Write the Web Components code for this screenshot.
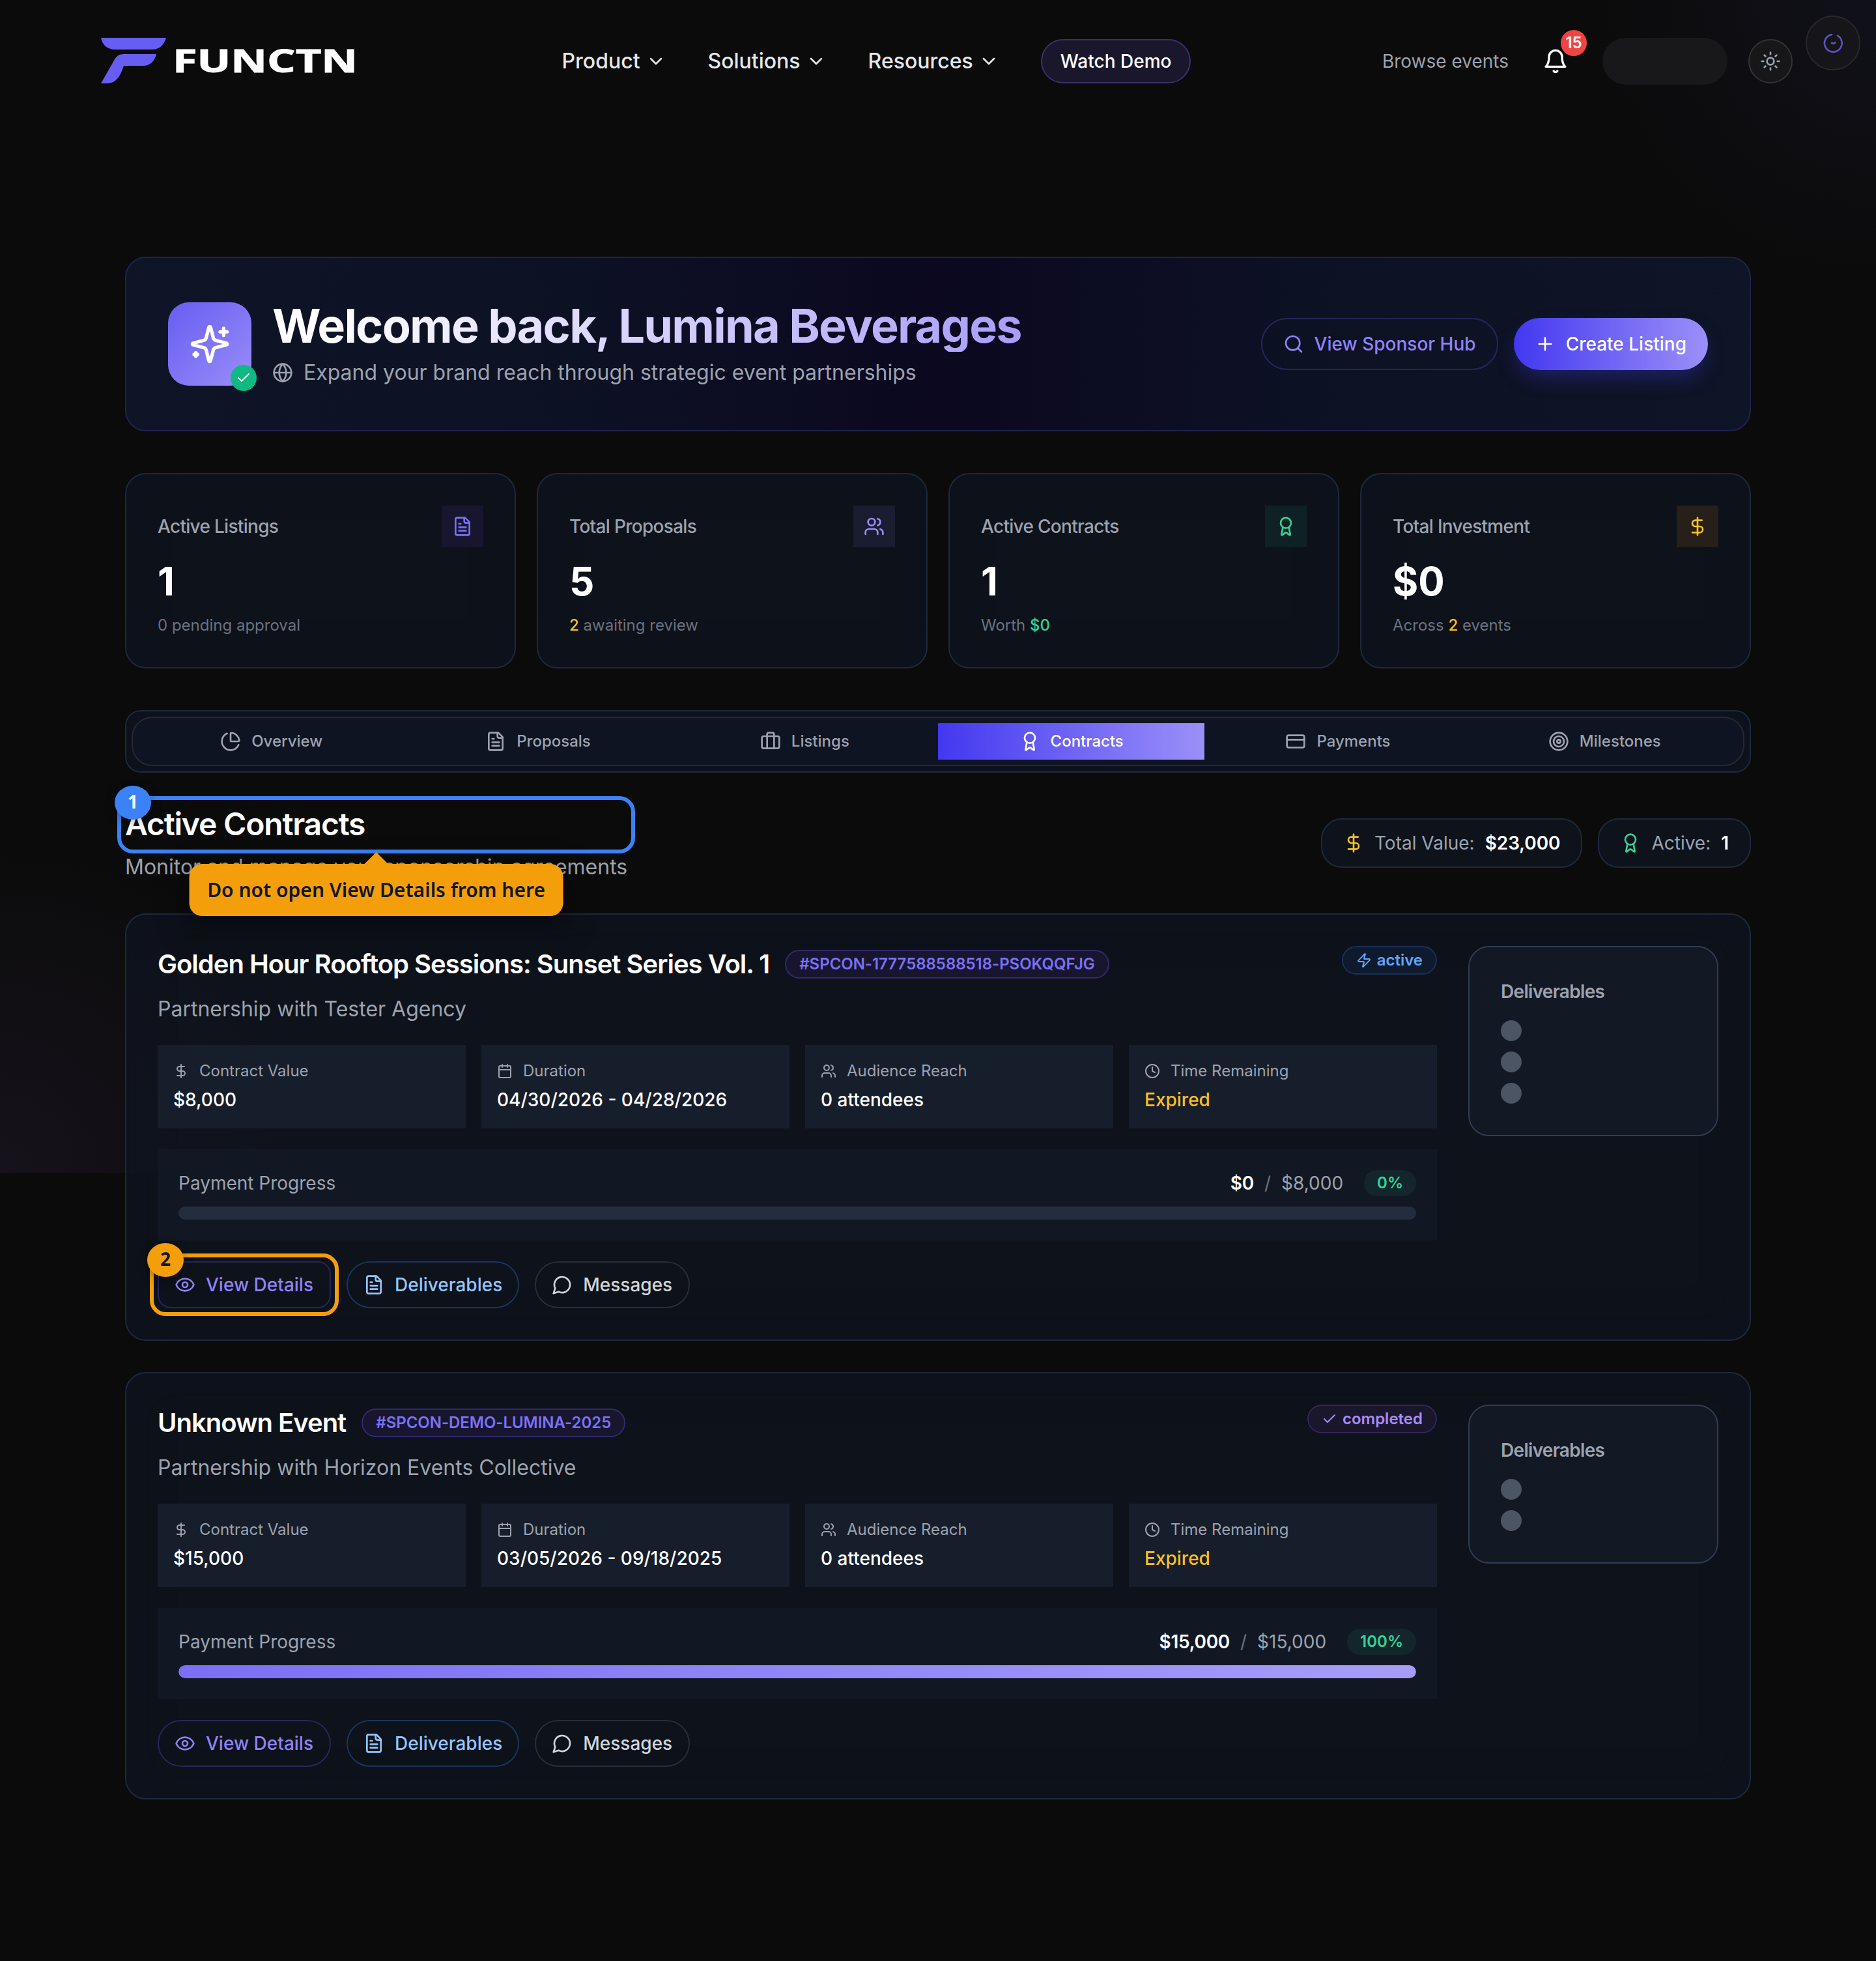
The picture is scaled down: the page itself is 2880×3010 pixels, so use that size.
<!DOCTYPE html>
<html lang="en">
<head>
<meta charset="utf-8">
<title>Functn - Sponsor Dashboard</title>
<style>
  * { box-sizing: border-box; }
  body {
    margin: 0;
    width: 2880px;
    min-height: 3010px;
    position: relative;
    background: #0b0b0b;
    color: #fff;
    font-family: Inter, "Liberation Sans", sans-serif;
    font-size: 28px;
    line-height: 40px;
  }
  .glow {
    position: absolute;
    top: 0;
    left: 0;
    width: 2880px;
    height: 1800px;
    z-index: -1;
    background:
      radial-gradient(circle 520px at 2880px 0, rgba(40, 38, 84, .2), transparent 85%),
      radial-gradient(circle 600px at 0 1800px, rgba(84, 60, 120, .15), transparent 85%);
  }
  main {
    display: flex;
    flex-direction: column;
    padding: 206px 192px 248px;
  }
  .stats {
    display: grid;
    grid-template-columns: repeat(4, 1fr);
    gap: 32px;
    margin: 64px 0;
  }
  .section-head {
    display: flex;
    justify-content: space-between;
    align-items: center;
    margin: 48px 0;
  }
  .section-head h2 {
    margin: 0;
    height: 64px;
    font-size: 48px;
    line-height: 62px;
    font-weight: 600;
    letter-spacing: -1.2px;
  }
  .section-head p {
    margin: 8px 0 0;
    height: 48px;
    font-size: 32px;
    line-height: 50px;
    color: #9ca3af;
  }
  .chips { display: flex; gap: 24px; }
  .contracts { display: flex; flex-direction: column; gap: 48px; }
  b.amber { color: #fbbf24; font-weight: 500; }
  b.green { color: #34d399; font-weight: 500; }
</style>
</head>
<body>
  <div class="glow"></div>
  <site-header></site-header>
  <main>
    <hero-banner name="Lumina Beverages">Expand your brand reach through strategic event partnerships</hero-banner>

    <div class="stats">
      <stat-card label="Active Listings" value="1" icon="file" tone="indigo">0 pending approval</stat-card>
      <stat-card label="Total Proposals" value="5" icon="users" tone="violet"><b class="amber">2</b> awaiting review</stat-card>
      <stat-card label="Active Contracts" value="1" icon="award" tone="green">Worth <b class="green">$0</b></stat-card>
      <stat-card label="Total Investment" value="$0" icon="dollar" tone="amber">Across <b class="amber">2</b> events</stat-card>
    </div>

    <tab-bar active="Contracts"></tab-bar>

    <div class="section-head">
      <div>
        <tour-mark number="1" tone="blue" tip="Do not open View Details from here"><h2>Active Contracts</h2></tour-mark>
        <p>Monitor and manage your sponsorship agreements</p>
      </div>
      <div class="chips">
        <info-chip icon="dollar" color="#fbbf24" label="Total Value:" value="$23,000"></info-chip>
        <info-chip icon="award" color="#34d399" label="Active:" value="1"></info-chip>
      </div>
    </div>

    <div class="contracts">
      <contract-card heading="Golden Hour Rooftop Sessions: Sunset Series Vol. 1" code="#SPCON-1777588588518-PSOKQQFJG"
        partner="Tester Agency" status="active" total="$8,000" paid="$0" percent="0"
        duration="04/30/2026 - 04/28/2026" deliverables="3" marked></contract-card>
      <contract-card heading="Unknown Event" code="#SPCON-DEMO-LUMINA-2025"
        partner="Horizon Events Collective" status="completed" total="$15,000" paid="$15,000" percent="100"
        duration="03/05/2026 - 09/18/2025" deliverables="2"></contract-card>
    </div>
  </main>

<script>
const ICONS = {
  chevron: '<path d="m6 9 6 6 6-6"/>',
  bell: '<path d="M6 8a6 6 0 0 1 12 0c0 7 3 9 3 9H3s3-2 3-9"/><path d="M10.3 21a1.94 1.94 0 0 0 3.4 0"/>',
  sun: '<circle cx="12" cy="12" r="4"/><path d="M12 2v2M12 20v2M4.93 4.93l1.41 1.41M17.66 17.66l1.41 1.41M2 12h2M20 12h2M6.34 17.66l-1.41 1.41M19.07 4.93l-1.41 1.41"/>',
  dial: '<path d="M10.6 2.3a10 10 0 1 0 6.6 1.2"/><path d="M10.6 12l1.9.9 2.2-1.5"/>',
  sparkles: '<path d="M9.937 15.5A2 2 0 0 0 8.5 14.063l-6.135-1.582a.5.5 0 0 1 0-.962L8.5 9.936A2 2 0 0 0 9.937 8.5l1.582-6.135a.5.5 0 0 1 .963 0L14.063 8.5A2 2 0 0 0 15.5 9.937l6.135 1.581a.5.5 0 0 1 0 .964L15.5 14.063a2 2 0 0 0-1.437 1.437l-1.582 6.135a.5.5 0 0 1-.963 0z"/><path d="M20 3v4M22 5h-4M4 17v2M5 18H3"/>',
  check: '<path d="M20 6 9 17l-5-5"/>',
  globe: '<circle cx="12" cy="12" r="10"/><path d="M12 2a14.5 14.5 0 0 0 0 20 14.5 14.5 0 0 0 0-20M2 12h20"/>',
  search: '<circle cx="11" cy="11" r="8"/><path d="m21 21-4.3-4.3"/>',
  plus: '<path d="M5 12h14M12 5v14"/>',
  file: '<path d="M15 2H6a2 2 0 0 0-2 2v16a2 2 0 0 0 2 2h12a2 2 0 0 0 2-2V7Z"/><path d="M14 2v4a2 2 0 0 0 2 2h4M10 9H8M16 13H8M16 17H8"/>',
  users: '<path d="M16 21v-2a4 4 0 0 0-4-4H6a4 4 0 0 0-4 4v2"/><circle cx="9" cy="7" r="4"/><path d="M22 21v-2a4 4 0 0 0-3-3.87M16 3.13a4 4 0 0 1 0 7.75"/>',
  award: '<path d="m15.477 12.89 1.515 8.526a.5.5 0 0 1-.81.47l-3.58-2.687a1 1 0 0 0-1.197 0l-3.586 2.686a.5.5 0 0 1-.81-.469l1.514-8.526"/><circle cx="12" cy="8" r="6"/>',
  dollar: '<path d="M12 2v20M17 5H9.5a3.5 3.5 0 0 0 0 7h5a3.5 3.5 0 0 1 0 7H6"/>',
  pie: '<path d="M21 12c.552 0 1.005-.449.95-.998a10 10 0 0 0-8.953-8.951c-.55-.055-.998.398-.998.95v8a1 1 0 0 0 1 1z"/><path d="M21.21 15.89A10 10 0 1 1 8 2.83"/>',
  briefcase: '<path d="M16 20V4a2 2 0 0 0-2-2h-4a2 2 0 0 0-2 2v16"/><rect width="20" height="14" x="2" y="6" rx="2"/>',
  card: '<rect width="20" height="14" x="2" y="5" rx="2"/><path d="M2 10h20"/>',
  target: '<circle cx="12" cy="12" r="10"/><circle cx="12" cy="12" r="6"/><circle cx="12" cy="12" r="2"/>',
  calendar: '<path d="M8 2v4M16 2v4"/><rect width="18" height="18" x="3" y="4" rx="2"/><path d="M3 10h18"/>',
  clock: '<circle cx="12" cy="12" r="10"/><path d="M12 6v6l4 2"/>',
  zap: '<path d="M4 14a1 1 0 0 1-.78-1.63l9.9-10.2a.5.5 0 0 1 .86.46l-1.92 6.02A1 1 0 0 0 13 10h7a1 1 0 0 1 .78 1.63l-9.9 10.2a.5.5 0 0 1-.86-.46l1.92-6.02A1 1 0 0 0 11 14z"/>',
  eye: '<path d="M2.062 12.348a1 1 0 0 1 0-.696 10.75 10.75 0 0 1 19.876 0 1 1 0 0 1 0 .696 10.75 10.75 0 0 1-19.876 0"/><circle cx="12" cy="12" r="3"/>',
  message: '<path d="M7.9 20A9 9 0 1 0 4 16.1L2 22Z"/>'
};

class UiIcon extends HTMLElement {
  constructor() {
    super();
    this.attachShadow({ mode: 'open' });
  }

  connectedCallback() {
    const size = this.getAttribute('size') || 32;
    this.shadowRoot.innerHTML = `
      <style>
        :host { display: block; flex: none; width: ${size}px; height: ${size}px; }
        svg { display: block; }
      </style>
      <svg width="${size}" height="${size}" viewBox="0 0 24 24" fill="none" stroke="currentColor"
        stroke-width="2" stroke-linecap="round" stroke-linejoin="round">${ICONS[this.getAttribute('name')]}</svg>
    `;
  }
}

class SiteHeader extends HTMLElement {
  constructor() {
    super();
    this.attachShadow({ mode: 'open' });
  }

  connectedCallback() {
    const links = ['Product', 'Solutions', 'Resources'];

    this.shadowRoot.innerHTML = `
      <style>
        * { box-sizing: border-box; }
        :host { display: flex; justify-content: space-between; align-items: center; height: 188px; padding: 0 128px; }
        .logo { display: block; width: 441px; height: 80px; }
        nav, .right { display: flex; align-items: center; }
        nav { gap: 64px; }
        .link { display: flex; align-items: center; gap: 8px; font-size: 32px; font-weight: 500; color: #e5e7eb; }
        .demo {
          height: 68px; padding: 0 28px; border: 2px solid #37326c; border-radius: 34px;
          display: flex; align-items: center; background: #1a172d; font-weight: 500;
        }
        .right { gap: 32px; color: #9ca3af; }
        .bell { position: relative; width: 80px; height: 80px; padding: 20px; color: #fff; }
        .count {
          position: absolute; top: -8px; right: -8px; width: 40px; height: 40px; border-radius: 50%;
          background: #ef4444; font-size: 24px; font-weight: 600; text-align: center;
        }
        .skeleton { width: 192px; height: 72px; border-radius: 36px; background: #18181a; }
        .round {
          display: flex; align-items: center; justify-content: center; width: 68px; height: 68px;
          border: 2px solid #323237; border-radius: 50%; background: #17171a;
        }
        .floating {
          position: absolute; top: 24px; right: 24px; width: 84px; height: 84px;
          border-color: #27272d; background: #15151a; color: #5b50c8;
        }
      </style>

      <svg class="logo" viewBox="128 54 441 80">
        <path fill="#675df2" d="M155 58H255C252 68 246 76 233 76H177C165 76 157 69 155 58Z"/>
        <path fill="#675df2" d="M190 83H240C237 94 231 101 219 101H190C186 112 181 128 164 128H155L175 93C178 87 182 83 190 83Z"/>
        <text x="265" y="111" font-family="Open Sans" font-weight="700" font-size="48" fill="#fff"
          stroke="#fff" stroke-width="1" textLength="284" lengthAdjust="spacingAndGlyphs">FUNCTN</text>
      </svg>
      <nav>
        ${links.map(link => `<span class="link">${link}<ui-icon name="chevron"></ui-icon></span>`).join('')}
        <span class="demo">Watch Demo</span>
      </nav>
      <div class="right">
        <span>Browse events</span>
        <span class="bell"><ui-icon name="bell" size="40"></ui-icon><span class="count">15</span></span>
        <span class="skeleton"></span>
        <span class="round"><ui-icon name="sun"></ui-icon></span>
      </div>
      <span class="round floating"><ui-icon name="dial"></ui-icon></span>
    `;
  }
}

class HeroBanner extends HTMLElement {
  constructor() {
    super();
    this.attachShadow({ mode: 'open' });
  }

  connectedCallback() {
    this.shadowRoot.innerHTML = `
      <style>
        * { box-sizing: border-box; }
        :host {
          box-sizing: border-box; display: flex; align-items: center; gap: 32px; height: 268px; padding: 0 64px;
          border: 2px solid #20224f; border-radius: 32px;
          background: linear-gradient(90deg, #0e1526, #0d1124 28%, #0b0820 50%, #0d1124 72%, #0e1526);
        }
        .mark {
          position: relative; width: 128px; height: 128px; padding: 32px; border-radius: 32px;
          background: linear-gradient(135deg, #675df2, #998df8);
        }
        .ok {
          position: absolute; right: -8px; bottom: -8px; width: 40px; height: 40px; padding: 8px;
          border-radius: 50%; background: #10b981;
        }
        .copy { flex: 1; }
        h1 {
          margin: 0; width: max-content; font-size: 72px; line-height: 80px; font-weight: 700; letter-spacing: -1.8px;
          background: linear-gradient(90deg, #fff 6%, #a89df9); -webkit-background-clip: text; background-clip: text;
          color: transparent;
        }
        p { display: flex; align-items: center; gap: 16px; height: 48px; margin: 8px 0 0; font-size: 32px; line-height: 50px; color: #9ca3af; }
        .actions { display: flex; gap: 24px; }
        .btn {
          display: flex; align-items: center; gap: 16px; height: 80px; padding: 0 33px 0 32px;
          border-radius: 40px; font-weight: 500;
        }
        .outline { padding: 0 32px; border: 2px solid #28265a; color: #8f83f7; }
        .solid { background: linear-gradient(90deg, #4338f0, #9b90f8); box-shadow: 0 16px 32px -6px rgba(67, 56, 240, .35); }
      </style>

      <div class="mark">
        <ui-icon name="sparkles" size="64"></ui-icon>
        <span class="ok"><ui-icon name="check" size="24"></ui-icon></span>
      </div>
      <div class="copy">
        <h1>Welcome back, ${this.getAttribute('name')}</h1>
        <p><ui-icon name="globe"></ui-icon><span><slot></slot></span></p>
      </div>
      <div class="actions">
        <span class="btn outline"><ui-icon name="search"></ui-icon>View Sponsor Hub</span>
        <span class="btn solid"><ui-icon name="plus"></ui-icon>Create Listing</span>
      </div>
    `;
  }
}

const TONES = {
  indigo: ['#7c70f6', '#17162e'],
  violet: ['#998df8', '#1a1c2f'],
  green: ['#34d399', '#0e2125'],
  amber: ['#fbbf24', '#261f1a']
};

class StatCard extends HTMLElement {
  constructor() {
    super();
    this.attachShadow({ mode: 'open' });
  }

  connectedCallback() {
    const [color, fill] = TONES[this.getAttribute('tone')];

    this.shadowRoot.innerHTML = `
      <style>
        :host {
          box-sizing: border-box; display: block; padding: 48px; border: 2px solid #1e293b; border-radius: 32px;
          background: rgba(17, 24, 36, .6); box-shadow: inset 0 0 64px rgba(12, 18, 34, .4);
        }
        .top { display: flex; justify-content: space-between; align-items: center; color: #9ca3af; font-weight: 500; letter-spacing: -.7px; }
        .box { padding: 16px; color: ${color}; background: ${fill}; }
        .value { margin: 16px 0; font-size: 60px; line-height: 72px; font-weight: 700; }
        .note { font-size: 24px; line-height: 32px; color: #6b7280; }
      </style>

      <div class="top">${this.getAttribute('label')}<span class="box"><ui-icon name="${this.getAttribute('icon')}"></ui-icon></span></div>
      <div class="value">${this.getAttribute('value')}</div>
      <div class="note"><slot></slot></div>
    `;
  }
}

class TabBar extends HTMLElement {
  constructor() {
    super();
    this.attachShadow({ mode: 'open' });
  }

  connectedCallback() {
    const active = this.getAttribute('active');
    const tabs = [
      ['Overview', 'pie'], ['Proposals', 'file'], ['Listings', 'briefcase'],
      ['Contracts', 'award'], ['Payments', 'card'], ['Milestones', 'target']
    ];

    this.shadowRoot.innerHTML = `
      <style>
        :host { display: block; padding: 8px; border: 2px solid #1e293b; border-radius: 24px; background: #0c111b; }
        .list {
          display: grid; grid-template-columns: repeat(6, 1fr); padding: 8px;
          border: 2px solid #262931; border-radius: 32px; background: #0e1422;
        }
        .tab {
          display: flex; align-items: center; justify-content: center; gap: 16px; height: 56px;
          font-size: 24px; font-weight: 500; color: #9ca3af;
        }
        .on { color: #fff; background: linear-gradient(90deg, #4338f0, #9b90f8); }
      </style>

      <div class="list">
        ${tabs.map(([name, icon]) => `
          <span class="tab ${name === active ? 'on' : ''}"><ui-icon name="${icon}"></ui-icon>${name}</span>
        `).join('')}
      </div>
    `;
  }
}

class TourMark extends HTMLElement {
  constructor() {
    super();
    this.attachShadow({ mode: 'open' });
  }

  connectedCallback() {
    const tip = this.getAttribute('tip');
    const blue = this.getAttribute('tone') === 'blue';

    this.shadowRoot.innerHTML = `
      <style>
        * { box-sizing: border-box; }
        :host { display: block; position: relative; z-index: 2; font-family: "Noto Sans", "Open Sans", sans-serif; }
        .body { font-family: Inter, "Liberation Sans", sans-serif; }
        .ring {
          position: absolute; inset: -12px; border: 6px solid ${blue ? '#3b82f6' : '#f59e0b'};
          border-radius: 24px;
        }
        .num {
          position: absolute; left: -16px; top: -28px; width: 56px; height: 52px; border-radius: 28px / 26px;
          background: ${blue ? '#3b82f6' : '#f59e0b'}; color: ${blue ? '#fff' : '#111827'};
          font-size: 28px; font-weight: 700; line-height: 49px; text-align: center;
          box-shadow: 0 4px 16px rgba(0, 0, 0, .3);
        }
        .tip {
          position: absolute; left: 50%; top: 92px; transform: translateX(-50%); height: 80px; padding: 0 28px;
          border-radius: 20px; background: #f59e0b; color: #111827; font-size: 30px; font-weight: 600;
          line-height: 79px; white-space: nowrap; box-shadow: 0 16px 48px rgba(0, 0, 0, .5);
        }
        .tip::before {
          content: ""; position: absolute; left: 50%; top: -18px; margin-left: -18px;
          border: 18px solid transparent; border-top: 0; border-bottom-color: #f59e0b;
        }
      </style>

      <div class="body"><slot></slot></div>
      <span class="ring"></span>
      <span class="num">${this.getAttribute('number')}</span>
      ${tip ? `<span class="tip">${tip}</span>` : ''}
    `;
  }
}

class InfoChip extends HTMLElement {
  constructor() {
    super();
    this.attachShadow({ mode: 'open' });
  }

  connectedCallback() {
    this.shadowRoot.innerHTML = `
      <style>
        :host {
          box-sizing: border-box; display: flex; align-items: center; gap: 16px; height: 76px; padding: 0 32px;
          border: 2px solid #1e293b; border-radius: 32px; background: #0d121b; color: #9ca3af;
        }
        ui-icon { color: ${this.getAttribute('color')}; }
        b { color: #fff; font-weight: 600; letter-spacing: -.1px; }
      </style>
      <ui-icon name="${this.getAttribute('icon')}"></ui-icon>
      <span>${this.getAttribute('label')}</span>
      <b>${this.getAttribute('value')}</b>
    `;
  }
}

class ContractCard extends HTMLElement {
  constructor() {
    super();
    this.attachShadow({ mode: 'open' });
  }

  connectedCallback() {
    const get = name => this.getAttribute(name);
    const marked = this.hasAttribute('marked');
    const facts = [
      ['dollar', 'Contract Value', get('total')],
      ['calendar', 'Duration', get('duration')],
      ['users', 'Audience Reach', '0 attendees'],
      ['clock', 'Time Remaining', 'Expired']
    ];
    const view = `<span class="btn view ${marked ? 'square' : ''}"><ui-icon name="eye"></ui-icon>View Details</span>`;

    this.shadowRoot.innerHTML = `
      <style>
        * { box-sizing: border-box; }
        :host {
          display: flex; align-items: flex-start; gap: 48px; padding: 48px;
          border: 2px solid #1e293b; border-radius: 32px;
          background: rgba(17, 24, 36, .6); box-shadow: inset 0 0 72px rgba(12, 18, 34, .45);
        }
        .main { flex: 1; }
        .head { display: flex; align-items: flex-start; justify-content: space-between; }
        .title { display: flex; align-items: center; gap: 24px; }
        h3 { margin: 0; font-size: 40px; line-height: 56px; font-weight: 600; letter-spacing: -1px; }
        .pill {
          display: flex; align-items: center; gap: 8px; height: 44px; padding: 0 20px; border: 2px solid;
          border-radius: 22px; font-size: 24px; line-height: 32px; font-weight: 600;
        }
        .code { color: #7c70f6; background: #17162e; border-color: #33296f; letter-spacing: -.04px; }
        .active { color: #60a5fa; background: #101a2e; border-color: #1a3058; }
        .completed { color: #a78bfa; background: #1a162c; border-color: #33255c; }
        .partner { height: 48px; margin: 16px 0 32px; font-size: 32px; line-height: 50px; color: #9ca3af; }
        .facts { display: grid; grid-template-columns: repeat(4, 1fr); gap: 24px; }
        .fact { height: 128px; padding: 24px; background: #171e2b; font-weight: 500; }
        .fact div { display: flex; align-items: center; gap: 16px; margin-bottom: 8px; font-size: 24px; line-height: 32px; font-weight: 400; color: #9ca3af; }
        .fact:last-child > span { color: #fbbf24; }
        .pay { margin: 32px 0; padding: 32px; background: #121823; }
        .row { display: flex; align-items: center; gap: 16px; height: 40px; color: #9ca3af; }
        .row b { margin-left: auto; color: #fff; font-weight: 600; letter-spacing: -.3px; }
        .row i { font-style: normal; color: #6b7280; }
        .pct { margin-left: 16px; height: 40px; padding: 0 20px; border-radius: 20px; background: #12262b; color: #34d399; font-size: 24px; font-weight: 600; }
        .bar { height: 20px; margin-top: 16px; border-radius: 10px; background: #242d3d; overflow: hidden; }
        .fill { width: ${get('percent')}%; height: 20px; border-radius: 10px; background: linear-gradient(90deg, #7b70f5, #a79df8); }
        .actions { display: flex; gap: 24px; }
        .btn {
          display: flex; align-items: center; gap: 16px; height: 72px; padding: 0 25px 0 24px;
          border: 2px solid #292d36; border-radius: 36px; font-weight: 500; color: #d1d5db;
        }
        .view { border-color: #28265a; color: #8f83f7; }
        .square { border-radius: 20px; }
        .blue { padding-right: 24px; border-color: #1b3460; color: #93c5fd; }
        aside {
          width: 384px; padding: 48px; border: 2px solid #303d50; border-radius: 32px; background: #121824;
          color: #9ca3af; font-weight: 600; letter-spacing: -.7px;
        }
        .dots { display: grid; gap: 16px; margin-top: 24px; }
        .dot { width: 32px; height: 32px; border-radius: 50%; background: #4b5563; }
      </style>

      <div class="main">
        <div class="head">
          <div class="title"><h3>${get('heading')}</h3><span class="pill code">${get('code')}</span></div>
          <span class="pill ${get('status')}"><ui-icon name="${get('status') === 'active' ? 'zap' : 'check'}" size="24"></ui-icon>${get('status')}</span>
        </div>
        <p class="partner">Partnership with ${get('partner')}</p>
        <div class="facts">
          ${facts.map(([icon, label, value]) => `
            <div class="fact"><div><ui-icon name="${icon}" size="24"></ui-icon>${label}</div><span>${value}</span></div>
          `).join('')}
        </div>
        <div class="pay">
          <div class="row">
            <span>Payment Progress</span><b>${get('paid')}</b><i>/</i><span>${get('total')}</span>
            <span class="pct">${get('percent')}%</span>
          </div>
          <div class="bar"><div class="fill"></div></div>
        </div>
        <div class="actions">
          ${marked ? `<tour-mark number="2" tone="amber">${view}</tour-mark>` : view}
          <span class="btn blue"><ui-icon name="file"></ui-icon>Deliverables</span>
          <span class="btn"><ui-icon name="message"></ui-icon>Messages</span>
        </div>
      </div>
      <aside>
        Deliverables
        <div class="dots">${'<span class="dot"></span>'.repeat(Number(get('deliverables')))}</div>
      </aside>
    `;
  }
}

customElements.define('ui-icon', UiIcon);
customElements.define('site-header', SiteHeader);
customElements.define('hero-banner', HeroBanner);
customElements.define('stat-card', StatCard);
customElements.define('tab-bar', TabBar);
customElements.define('tour-mark', TourMark);
customElements.define('info-chip', InfoChip);
customElements.define('contract-card', ContractCard);
</script>
</body>
</html>
